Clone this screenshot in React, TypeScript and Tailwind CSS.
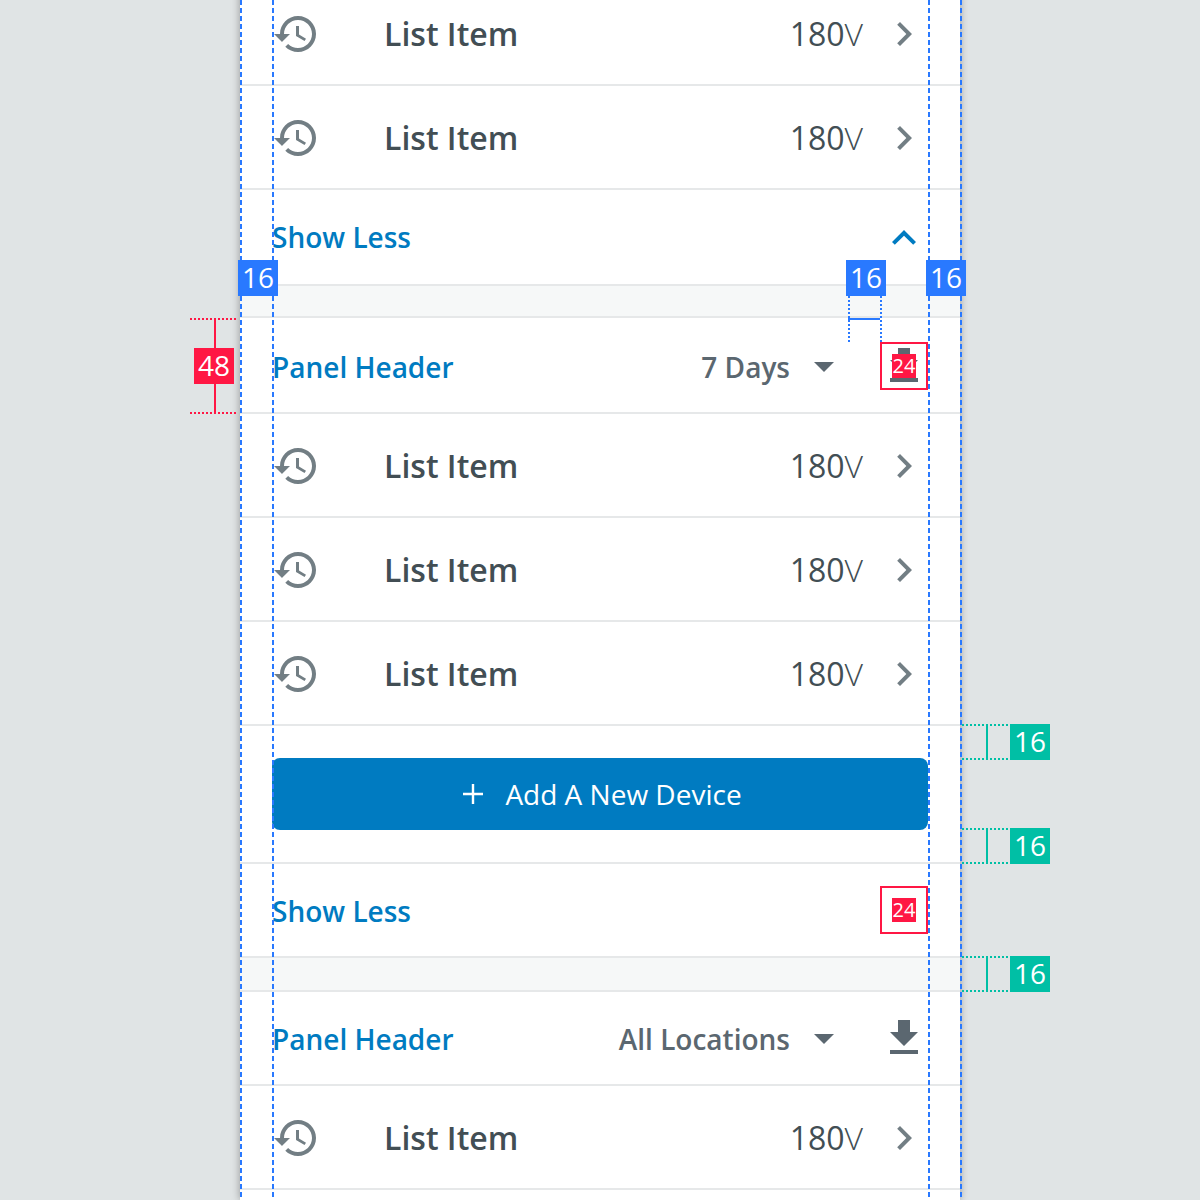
const vDash =
  "bg-[repeating-linear-gradient(to_bottom,#2979ff_0,#2979ff_5px,transparent_5px,transparent_8px)]"
const vDot =
  "bg-[repeating-linear-gradient(to_bottom,#2979ff_0,#2979ff_2px,transparent_2px,transparent_4px)]"
const redDot =
  "bg-[repeating-linear-gradient(to_right,#ff1744_0,#ff1744_2px,transparent_2px,transparent_4px)]"
const greenDot =
  "bg-[repeating-linear-gradient(to_right,#00bfa5_0,#00bfa5_2px,transparent_2px,transparent_4px)]"

function HistoryIcon() {
  return (
    <svg viewBox="0 0 24 24" className="h-12 w-12 flex-none fill-[#727e84]">
      <path d="M13 3c-4.97 0-9 4.03-9 9H1l3.89 3.89.07.14L9 12H6c0-3.87 3.13-7 7-7s7 3.13 7 7-3.13 7-7 7c-1.93 0-3.68-.79-4.94-2.06l-1.42 1.42C8.27 19.99 10.51 21 13 21c4.97 0 9-4.03 9-9s-4.03-9-9-9zm-1 5v5l4.28 2.54.72-1.21-3.5-2.08V8H12z" />
    </svg>
  )
}

function ListItem() {
  return (
    <div className="flex h-[104px] items-center border-b-2 border-[#e6e8e9] pt-[2px] pl-8 pr-8">
      <HistoryIcon />
      <span className="ml-16 flex-1 text-[32px] font-semibold text-[#424e54]">List Item</span>
      <span className="text-[32px] text-[#424e54]">
        180<span className="font-light">V</span>
      </span>
      <svg viewBox="0 0 24 24" className="ml-[17px] h-12 w-12 flex-none fill-[#727e84]">
        <path d="M10 6L8.59 7.41 13.17 12l-4.58 4.59L10 18l6-6z" />
      </svg>
    </div>
  )
}

function DownloadIcon() {
  return (
    <svg viewBox="0 0 24 24" className="h-12 w-12 flex-none fill-[#5b6770]">
      <path d="M19 9h-4V3H9v6H5l7 7 7-7zM5 18v2h14v-2H5z" />
    </svg>
  )
}

function PanelHeader({ filter, height }: { filter: string; height: string }) {
  return (
    <div className={`flex items-center border-b-2 border-[#e6e8e9] pl-8 pr-8 ${height}`}>
      <span className="flex-1 pt-[2px] text-[28px] font-semibold text-[#007bc1]">Panel Header</span>
      <span className="mr-[10px] pt-[2px] text-[28px] font-semibold text-[#5b6770]">{filter}</span>
      <svg viewBox="0 0 24 24" className="h-12 w-12 flex-none fill-[#5b6770]">
        <path d="M7 10l5 5 5-5z" />
      </svg>
      <div className="ml-8">
        <DownloadIcon />
      </div>
    </div>
  )
}

function ShowLess({ height, chevron }: { height: string; chevron?: boolean }) {
  return (
    <div className={`flex items-center justify-between border-b-2 border-[#e6e8e9] pl-8 pr-8 ${height}`}>
      <span className="text-[28px] font-semibold text-[#007bc1]">Show Less</span>
      {chevron && (
        <svg viewBox="0 0 24 24" className="mt-[2px] h-12 w-12 flex-none fill-[#007bc1]">
          <path d="M12 8l-6 6 1.41 1.41L12 10.83l4.59 4.58L18 14z" />
        </svg>
      )}
    </div>
  )
}

function Spacer({ height }: { height: string }) {
  return <div className={`border-b-2 border-[#e6e8e9] bg-[#f6f8f8] ${height}`} />
}

function Tag({ className, children }: { className: string; children: string }) {
  return (
    <div className={`absolute flex h-9 w-10 items-center justify-center pb-[2px] text-[28px] text-white ${className}`}>
      {children}
    </div>
  )
}

function GreenMeasure({ className }: { className: string }) {
  return (
    <div className={`absolute left-[962px] flex w-[88px] ${className}`}>
      <div className="relative flex w-12 flex-col justify-between">
        <div className={`h-[2px] ${greenDot}`} />
        <div className={`h-[2px] ${greenDot}`} />
        <div className="absolute bottom-0 left-6 top-0 w-[2px] bg-[#00bfa5]" />
      </div>
      <div className="flex w-10 items-center justify-center bg-[#00bfa5] pb-[2px] text-[28px] text-white">16</div>
    </div>
  )
}

function Overlays() {
  return (
    <>
      <div className={`absolute inset-y-0 left-[240px] w-[2px] ${vDash}`} />
      <div className={`absolute inset-y-0 left-[272px] w-[2px] ${vDash}`} />
      <div className={`absolute inset-y-0 left-[928px] w-[2px] ${vDash}`} />
      <div className={`absolute inset-y-0 left-[960px] w-[2px] ${vDash}`} />

      <div className={`absolute left-[848px] top-[296px] h-12 w-[2px] ${vDot}`} />
      <div className={`absolute left-[880px] top-[296px] h-12 w-[2px] ${vDot}`} />
      <div className="absolute left-[848px] top-[318px] h-[2px] w-8 bg-[#2979ff]" />

      <Tag className="left-[238px] top-[260px] bg-[#2979ff]">16</Tag>
      <Tag className="left-[846px] top-[260px] bg-[#2979ff]">16</Tag>
      <Tag className="left-[926px] top-[260px] bg-[#2979ff]">16</Tag>

      <div className={`absolute left-[190px] top-[318px] h-[2px] w-12 ${redDot}`} />
      <div className={`absolute left-[190px] top-[412px] h-[2px] w-12 ${redDot}`} />
      <div className="absolute left-[214px] top-[318px] h-24 w-[2px] bg-[#ff1744]" />
      <Tag className="left-[194px] top-[348px] bg-[#ff1744]">48</Tag>

      <div className="absolute left-[880px] top-[342px] flex h-12 w-12 items-center justify-center border-2 border-[#ff1744]">
        <div className="flex h-6 w-6 items-center justify-center bg-[#ff1744] text-xl text-white">24</div>
      </div>
      <div className="absolute left-[880px] top-[886px] flex h-12 w-12 items-center justify-center border-2 border-[#ff1744]">
        <div className="flex h-6 w-6 items-center justify-center bg-[#ff1744] text-xl text-white">24</div>
      </div>

      <GreenMeasure className="top-[724px] h-9" />
      <GreenMeasure className="top-[828px] h-9" />
      <GreenMeasure className="top-[956px] h-9" />
    </>
  )
}

export default function App() {
  return (
    <div className="relative h-[1200px] overflow-hidden bg-[#e0e4e5] font-['Open_Sans',sans-serif]">
      <div className="mx-auto -mt-[18px] min-h-[1218px] w-[720px] bg-white shadow-[0_0_8px_rgba(0,0,0,0.35)]">
        <ListItem />
        <ListItem />
        <ShowLess height="h-24" chevron />
        <Spacer height="h-8" />
        <PanelHeader filter="7 Days" height="h-24 pt-[2px]" />
        <ListItem />
        <ListItem />
        <ListItem />
        <div className="border-b-2 border-[#e6e8e9] p-8">
          <button className="flex h-[72px] w-full items-center justify-center rounded-lg bg-[#007bc1] pl-[5px] text-[28px] text-white">
            <svg viewBox="0 0 20 20" className="mr-[22px] h-5 w-5 flex-none stroke-white stroke-[2.4]">
              <path d="M10 0v20M0 10h20" />
            </svg>
            Add A New Device
          </button>
        </div>
        <ShowLess height="h-[94px] pt-[2px]" />
        <Spacer height="h-[34px]" />
        <PanelHeader filter="All Locations" height="h-[94px]" />
        <ListItem />
      </div>
      <Overlays />
    </div>
  )
}
